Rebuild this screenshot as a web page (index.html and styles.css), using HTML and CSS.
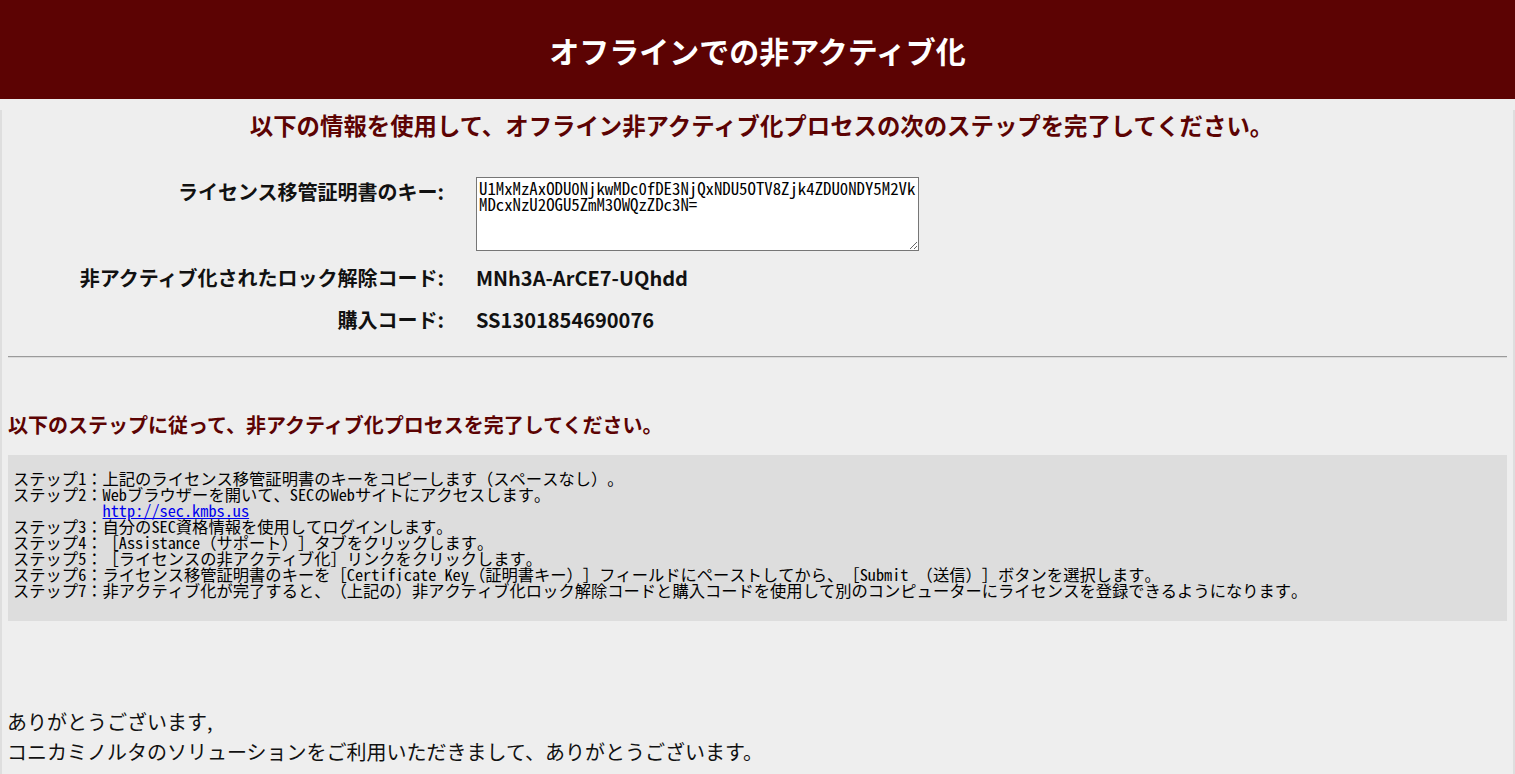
FILE: index.html
```html
<!DOCTYPE html>
<html lang="ja">
<head>
<meta charset="utf-8">
<title>オフラインでの非アクティブ化</title>
<link rel="stylesheet" href="styles.css">
</head>
<body>
<header class="top-bar">
  <h1 class="title">オフラインでの非アクティブ化</h1>
</header>
<main class="content">
  <h2 class="subtitle">以下の情報を使用して、オフライン非アクティブ化プロセスの次のステップを完了してください。</h2>
  <div class="info-grid">
    <div class="label">ライセンス移管証明書のキー:</div>
    <div class="value"><textarea class="key-box" readonly>U1MxMzAxODU0NjkwMDc0fDE3NjQxNDU5OTV8Zjk4ZDU0NDY5M2VkMDcxNzU2OGU5ZmM3OWQzZDc3N=</textarea></div>
    <div class="label">非アクティブ化されたロック解除コード:</div>
    <div class="value code">MNh3A-ArCE7-UQhdd</div>
    <div class="label">購入コード:</div>
    <div class="value code">SS1301854690076</div>
  </div>
  <hr class="divider">
  <h3 class="steps-title">以下のステップに従って、非アクティブ化プロセスを完了してください。</h3>
  <pre class="steps">ステップ1：上記のライセンス移管証明書のキーをコピーします（スペースなし）。
ステップ2：Webブラウザーを開いて、SECのWebサイトにアクセスします。
           <a href="#" class="link">http://sec.kmbs.us</a>
ステップ3：自分のSEC資格情報を使用してログインします。
ステップ4：［Assistance（サポート）］タブをクリックします。
ステップ5：［ライセンスの非アクティブ化］リンクをクリックします。
ステップ6：ライセンス移管証明書のキーを［Certificate Key（証明書キー）］フィールドにペーストしてから、［Submit （送信）］ボタンを選択します。
ステップ7：非アクティブ化が完了すると、（上記の）非アクティブ化ロック解除コードと購入コードを使用して別のコンピューターにライセンスを登録できるようになります。</pre>
  <p class="thanks">ありがとうございます,<br>コニカミノルタのソリューションをご利用いただきまして、ありがとうございます。</p>
</main>
</body>
</html>
```

FILE: styles.css
```css
html, body {
  margin: 0;
  padding: 0;
}
body {
  font-family: "Noto Sans CJK JP", "Noto Sans", sans-serif;
  background: #eeeeee;
  color: #111;
  text-spacing-trim: space-all;
}
.top-bar {
  height: 99px;
  background: #5c0303;
  display: flex;
  align-items: center;
  justify-content: center;
}
.title {
  margin: 0;
  color: #ffffff;
  font-size: 30px;
  font-weight: 700;
  line-height: 40px;
}
.content {
  background: #eeeeee;
  border-left: 2px solid #dedede;
  border-right: 2px solid #dedede;
  border-bottom: 1px solid #d6d6d6;
  padding: 0 6px;
  height: 675px;
  box-sizing: border-box;
}
.subtitle {
  margin: 11px 0 0;
  padding-left: 8px;
  text-align: center;
  color: #5c0303;
  font-size: 23.4px;
  line-height: 30px;
  font-weight: 700;
}
.info-grid {
  margin-top: 37px;
  display: grid;
  grid-template-columns: 436px 1fr;
  column-gap: 32px;
  row-gap: 12px;
  align-items: start;
}
.label {
  text-align: right;
  font-size: 20px;
  line-height: 30px;
  font-weight: 700;
  color: #111;
}
.value {
  font-size: 20px;
  line-height: 30px;
  font-weight: 700;
}
.key-box {
  display: block;
  width: 443px;
  height: 74px;
  box-sizing: border-box;
  margin: 0;
  padding: 2px 2px;
  border: 1px solid #767676;
  background: #fff;
  font-family: "Noto Sans Mono CJK JP", "Noto Sans CJK JP", monospace;
  font-size: 16.8px;
  line-height: 16px;
  color: #000;
  word-break: break-all;
}
.divider {
  margin: 21px 0 0;
  border: 0;
  border-top: 1px solid #9a9a9a;
  border-bottom: 1px solid #dadada;
  height: 0;
}
.steps-title {
  margin: 52px 0 0;
  color: #5c0303;
  font-size: 20px;
  line-height: 30px;
  font-weight: 700;
}
.steps {
  margin: 15px 0 0;
  background: #dddddd;
  padding: 15px 5px 23px;
  font-family: "Noto Sans Mono CJK JP", "Noto Sans CJK JP", monospace;
  font-size: 16.3px;
  line-height: 16px;
  color: #000;
}
.link {
  color: #0000ee;
  text-decoration: underline;
}
.thanks {
  margin: 86px 0 0 -1px;
  font-size: 20px;
  line-height: 30px;
  font-weight: 400;
  color: #111;
}
```
